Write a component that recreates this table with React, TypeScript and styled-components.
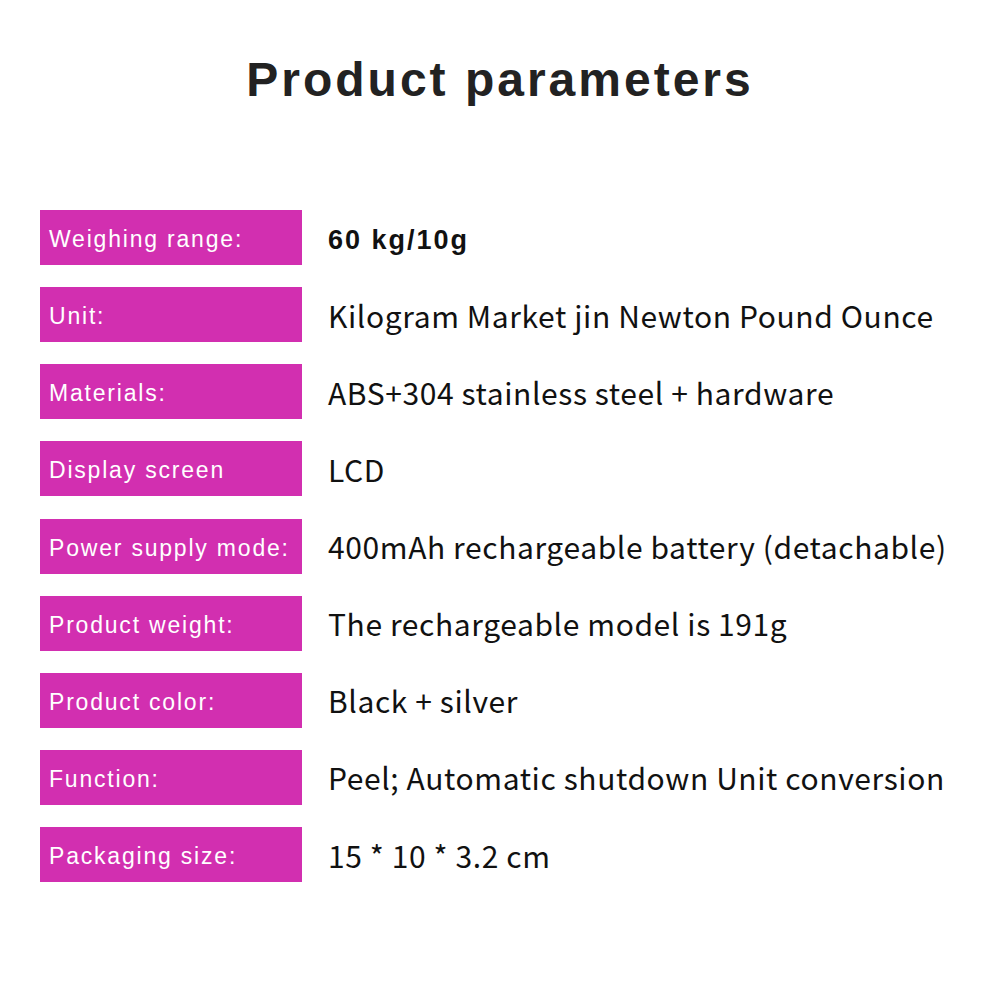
import React from "react";
import styled, { createGlobalStyle } from "styled-components";

const Global = createGlobalStyle`
  html, body { margin: 0; padding: 0; background: #ffffff; }
`;

const Page = styled.div`
  width: 1000px;
  height: 1000px;
  background: #ffffff;
  display: flex;
  flex-direction: column;
  align-items: stretch;
`;

const Title = styled.h1`
  margin: 0;
  height: 160px;
  padding-top: 52px;
  box-sizing: border-box;
  text-align: center;
  font-family: "Liberation Sans", Arial, sans-serif;
  font-weight: 700;
  font-size: 48px;
  letter-spacing: 3px;
  line-height: 56px;
  color: #222222;
`;

const Table = styled.div`
  display: flex;
  flex-direction: column;
  gap: 22.15px;
  padding-top: 50px;
  padding-left: 40px;
`;

const Row = styled.div`
  display: flex;
  align-items: center;
  gap: 26px;
  height: 55px;
`;

const Label = styled.div`
  width: 262px;
  height: 55px;
  box-sizing: border-box;
  padding-left: 9px;
  padding-top: 4px;
  display: flex;
  align-items: center;
  background: #d22fb0;
  color: #ffffff;
  font-family: "Liberation Sans", Arial, sans-serif;
  font-size: 23px;
  letter-spacing: 1.8px;
  white-space: nowrap;
`;

const Value = styled.div<{ $bold?: boolean }>`
  font-family: ${(p) =>
    p.$bold
      ? `"Liberation Sans", Arial, sans-serif`
      : `"Noto Sans CJK SC", "Noto Sans", sans-serif`};
  font-weight: ${(p) => (p.$bold ? 700 : 400)};
  font-size: ${(p) => (p.$bold ? "27px" : "30px")};
  letter-spacing: ${(p) => (p.$bold ? "2px" : "0.6px")};
  padding-top: ${(p) => (p.$bold ? "6px" : "0")};
  color: #111111;
  white-space: nowrap;
`;

const rows: { label: string; value: string; bold?: boolean }[] = [
  { label: "Weighing range:", value: "60 kg/10g", bold: true },
  { label: "Unit:", value: "Kilogram Market jin Newton Pound Ounce" },
  { label: "Materials:", value: "ABS+304 stainless steel + hardware" },
  { label: "Display screen", value: "LCD" },
  { label: "Power supply mode:", value: "400mAh rechargeable battery (detachable)" },
  { label: "Product weight:", value: "The rechargeable model is 191g" },
  { label: "Product color:", value: "Black + silver" },
  { label: "Function:", value: "Peel; Automatic shutdown Unit conversion" },
  { label: "Packaging size:", value: "15 * 10 * 3.2 cm" },
];

export default function App() {
  return (
    <Page>
      <Global />
      <Title>Product parameters</Title>
      <Table>
        {rows.map((r) => (
          <Row key={r.label}>
            <Label>{r.label}</Label>
            <Value $bold={r.bold}>{r.value}</Value>
          </Row>
        ))}
      </Table>
    </Page>
  );
}
